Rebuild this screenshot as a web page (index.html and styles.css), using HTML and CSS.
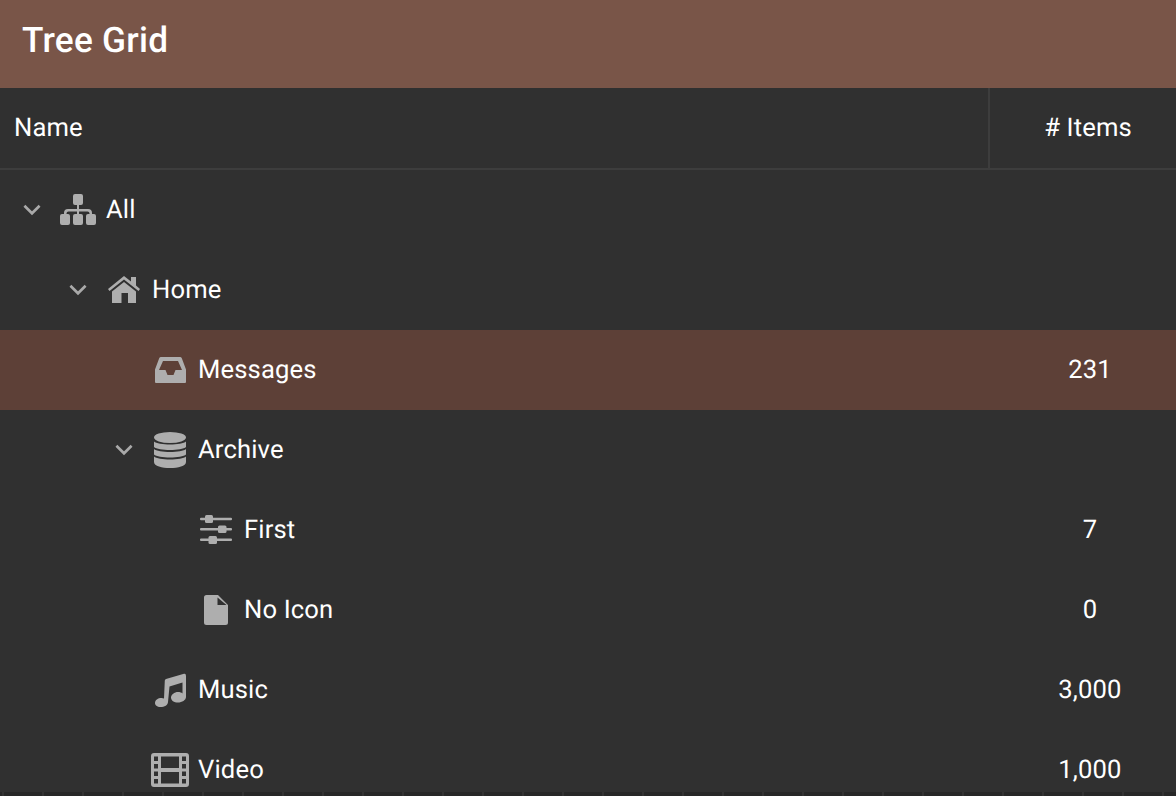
FILE: index.html
```html
<!DOCTYPE html>
<html lang="en">
<head>
<meta charset="utf-8">
<title>Tree Grid</title>
<link rel="stylesheet" href="styles.css">
</head>
<body>
<header class="appbar">Tree Grid</header>
<div class="grid">
  <div class="head">
    <div class="head-name">Name</div>
    <div class="head-items"># Items</div>
  </div>
  <div class="row">
    <div class="name level-0">
      <svg class="chev" viewBox="0 0 18 12"><path d="M2 2.5l7 7 7-7"/></svg>
      <span class="icon"><svg class="i-sitemap" viewBox="0 0 36 31"><path d="M15 0h6a2 2 0 0 1 2 2v7a2 2 0 0 1-2 2h-2v4h9a4 4 0 0 1 4 4v1h-2.500v-.500a2 2 0 0 0-2-2H19v2.500h2a2 2 0 0 1 2 2v7a2 2 0 0 1-2 2h-6a2 2 0 0 1-2-2v-7a2 2 0 0 1 2-2h2v-2.500H8.500a2 2 0 0 0-2 2v.500H4v-1a4 4 0 0 1 4-4h9v-4h-2a2 2 0 0 1-2-2V2a2 2 0 0 1 2-2zM2 20h6a2 2 0 0 1 2 2v7a2 2 0 0 1-2 2H2a2 2 0 0 1-2-2v-7a2 2 0 0 1 2-2zM28 20h6a2 2 0 0 1 2 2v7a2 2 0 0 1-2 2h-6a2 2 0 0 1-2-2v-7a2 2 0 0 1 2-2z"/></svg></span>
      <span class="label">All</span>
    </div>
    <div class="items"></div>
  </div>
  <div class="row">
    <div class="name level-1">
      <svg class="chev" viewBox="0 0 18 12"><path d="M2 2.5l7 7 7-7"/></svg>
      <span class="icon"><svg class="i-home" viewBox="0 0 32 27"><path d="M16 0L23 5.500V1H28V9.500L32 13L30.500 15L16 3.500L1.500 15L0 13z"/><path d="M16 6L28 15.500V27H20V17H13.500V27H4V15.500z"/></svg></span>
      <span class="label">Home</span>
    </div>
    <div class="items"></div>
  </div>
  <div class="row selected">
    <div class="name level-2">
      <span class="chev-space"></span>
      <span class="icon"><svg class="i-inbox" viewBox="0 0 31 26"><path fill-rule="evenodd" d="M6 0H25a2 2 0 0 1 1.800 1.200L31 12.500V25a1 1 0 0 1-1 1H1a1 1 0 0 1-1-1V12.500L4.200 1.200A2 2 0 0 1 6 0zM8 4L4 13H10.500L12.500 18H18.500L20.500 13H27L23 4z"/></svg></span>
      <span class="label">Messages</span>
    </div>
    <div class="items">231</div>
  </div>
  <div class="row">
    <div class="name level-2">
      <svg class="chev" viewBox="0 0 18 12"><path d="M2 2.5l7 7 7-7"/></svg>
      <span class="icon"><svg class="i-database" viewBox="0 0 32 36"><ellipse cx="16" cy="5.500" rx="16" ry="5.500"/><path d="M0 9.500C4 13.500 28 13.500 32 9.500V15C28 19 4 19 0 15z"/><path d="M0 17C4 21 28 21 32 17V22.500C28 26.500 4 26.500 0 22.500z"/><path d="M0 24.500C4 28.500 28 28.500 32 24.500V30C32 34 24 36 16 36S0 34 0 30z"/></svg></span>
      <span class="label">Archive</span>
    </div>
    <div class="items"></div>
  </div>
  <div class="row">
    <div class="name level-3">
      <span class="chev-space"></span>
      <span class="icon"><svg class="i-sliders" viewBox="0 0 32 29"><rect x="0" y="2.800" width="32" height="2.400" rx="1"/><rect x="5" y="0" width="8" height="8" rx="1.500"/><rect x="0" y="13" width="32" height="2.400" rx="1"/><rect x="18" y="10.500" width="8.500" height="7.500" rx="1.500"/><rect x="0" y="23.600" width="32" height="2.400" rx="1"/><rect x="8.500" y="21" width="8.500" height="8" rx="1.500"/></svg></span>
      <span class="label">First</span>
    </div>
    <div class="items">7</div>
  </div>
  <div class="row">
    <div class="name level-3">
      <span class="chev-space"></span>
      <span class="icon"><svg class="i-file" viewBox="0 0 24 30"><path d="M2.500 0H14l10 10v17.500a2.500 2.500 0 0 1-2.500 2.500H2.500A2.500 2.500 0 0 1 0 27.500V2.500A2.500 2.500 0 0 1 2.500 0z"/><path class="fold" d="M13.500 2.500V10H22.500z"/></svg></span>
      <span class="label">No Icon</span>
    </div>
    <div class="items">0</div>
  </div>
  <div class="row">
    <div class="name level-2">
      <span class="chev-space"></span>
      <span class="icon"><svg class="i-music" viewBox="0 0 31 34"><path d="M11 6L29 .8Q31 .3 31 3V24C31 27 27 29.500 23 29.500C19 29.500 16 27.500 16 24.500C16 21.500 19.500 19 23 19C25 19 26.500 19.500 27.500 20.500V9.500L14.500 13.500L13 29C13 32 9.500 34 5.500 34C2 34 0 32 0 30C0 27 3 25 6.500 25C7.500 25 8.500 25.200 9 25.500L9.800 7.500Q9.800 6.500 11 6z"/></svg></span>
      <span class="label">Music</span>
    </div>
    <div class="items">3,000</div>
  </div>
  <div class="row">
    <div class="name level-2">
      <span class="chev-space"></span>
      <span class="icon"><svg class="i-film" viewBox="0 0 38 34"><path fill-rule="evenodd" d="M3 0h32a3 3 0 0 1 3 3v28a3 3 0 0 1-3 3H3a3 3 0 0 1-3-3V3a3 3 0 0 1 3-3zM3 3.500V8H7V3.500zM31 3.500V8H35V3.500zM10 3.500V15H28V3.500zM3 11v4.500H7V11zM31 11v4.500H35V11zM3 18.500V23H7V18.500zM31 18.500V23H35V18.500zM10 19V30.500H28V19zM3 26V30.500H7V26zM31 26V30.500H35V26z"/></svg></span>
      <span class="label">Video</span>
    </div>
    <div class="items">1,000</div>
  </div>
</div>
<div class="next-row"></div>
</body>
</html>
```

FILE: styles.css
```css
html, body {
  margin: 0;
  height: 100%;
  overflow: hidden;
  background: #303030;
}
body {
  font-family: Roboto, "Liberation Sans", sans-serif;
  color: #fff;
  font-size: 25.6px;
  letter-spacing: .15px;
  text-rendering: geometricPrecision;
  display: flex;
  flex-direction: column;
}
.appbar {
  height: 88px;
  flex: none;
  box-sizing: border-box;
  padding: 0 0 8px 22px;
  display: flex;
  align-items: center;
  background: #795548;
  font-size: 35.2px;
  font-weight: 500;
  letter-spacing: .26px;
}
.grid {
  flex: none;
  height: 704px;
  overflow: hidden;
}
.head {
  height: 82px;
  box-sizing: border-box;
  display: flex;
  border-bottom: 2px solid #3d3d3d;
}
.head-name {
  flex: 1;
  padding: 0 0 1px 14px;
  display: flex;
  align-items: center;
  border-right: 2px solid #3d3d3d;
}
.head-items {
  width: 186px;
  flex: none;
  box-sizing: border-box;
  padding: 0 2px 1px 12px;
  display: flex;
  align-items: center;
  justify-content: center;
}
.row {
  height: 80px;
  box-sizing: border-box;
  padding-bottom: 1px;
  display: flex;
  align-items: center;
}
.row.selected {
  background: #5d4037;
}
.name {
  flex: 1;
  display: flex;
  align-items: center;
}
.level-0 { padding-left: 22px; }
.level-1 { padding-left: 68px; }
.level-2 { padding-left: 114px; }
.level-3 { padding-left: 160px; }
.chev {
  width: 20px;
  height: 13px;
  flex: none;
  fill: none;
  stroke: #a9a9a9;
  stroke-width: 2.400;
}
.chev-space {
  width: 20px;
  flex: none;
}
.icon {
  width: 46px;
  margin-left: 13px;
  flex: none;
  display: flex;
  justify-content: center;
}
.icon svg { fill: #aeaeae; display: block; }
.i-sitemap { width: 36px; height: 31px; }
.i-home { width: 32px; height: 27px; }
.i-inbox { width: 31px; height: 26px; }
.i-database { width: 32px; height: 36px; }
.i-sliders { width: 32px; height: 29px; }
.i-file { width: 24px; height: 30px; }
.i-music { width: 31px; height: 34px; }
.i-film { width: 38px; height: 34px; }
.fold { fill: #303030; }
.label {
  margin-left: 5px;
}
.items {
  width: 186px;
  flex: none;
  box-sizing: border-box;
  padding-left: 14px;
  text-align: center;
}
.next-row {
  height: 4px;
  background: repeating-linear-gradient(90deg, #272727 0 2px, #333 2px 4px, #272727 4px 40px);
}
```
